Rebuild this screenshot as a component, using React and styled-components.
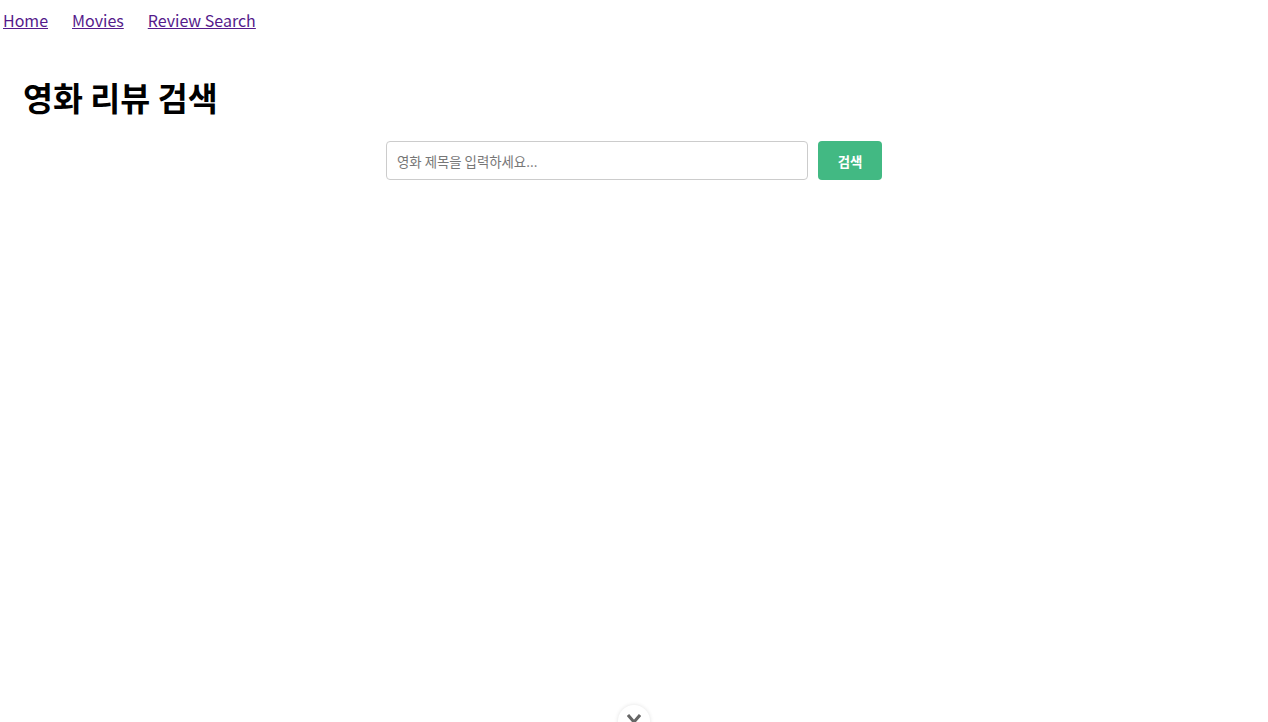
import React from "react";
import styled, { createGlobalStyle } from "styled-components";

const GlobalStyle = createGlobalStyle`
  html, body {
    margin: 0;
    padding: 0;
    background: #fff;
  }
  body {
    font-family: "Noto Sans CJK KR", sans-serif;
  }
`;

const Nav = styled.nav`
  display: flex;
  gap: 24px;
  padding: 8px 3px 0;
  height: 30px;
`;

const NavLink = styled.a`
  font-family: "Noto Sans CJK KR", sans-serif;
  font-size: 16px;
  line-height: 24px;
  color: #551a8b;
  text-decoration: underline;
`;

const Page = styled.div`
  padding: 37px 23px 0;
`;

const Title = styled.h1`
  margin: 0;
  font-family: "Noto Sans CJK KR", sans-serif;
  font-size: 32.6px;
  font-weight: 700;
  line-height: 44px;
  color: #000;
`;

const SearchRow = styled.form`
  display: flex;
  justify-content: center;
  gap: 10px;
  margin-top: 22px;
`;

const SearchInput = styled.input`
  width: 422px;
  height: 39px;
  box-sizing: border-box;
  padding: 0 10px;
  border: 1px solid #ccc;
  border-radius: 4px;
  font-family: "Noto Sans CJK KR", sans-serif;
  font-size: 13.4px;
  outline: none;
  &::placeholder {
    color: #777;
  }
`;

const SearchButton = styled.button`
  width: 64px;
  height: 39px;
  border: none;
  border-radius: 4px;
  background: #42b983;
  color: #fff;
  font-family: "Noto Sans CJK KR", sans-serif;
  font-size: 13.4px;
  font-weight: 700;
  cursor: pointer;
`;

const DevToggle = styled.div`
  position: fixed;
  left: 618px;
  top: 705px;
  width: 32px;
  height: 32px;
  border-radius: 50%;
  background: #fff;
  box-shadow: 0 0 4px rgba(0, 0, 0, 0.12);
  display: flex;
  justify-content: center;
  padding-top: 9px;
  box-sizing: border-box;
`;

export default function App() {
  return (
    <>
      <GlobalStyle />
      <Nav>
        <NavLink href="#">Home</NavLink>
        <NavLink href="#">Movies</NavLink>
        <NavLink href="#">Review Search</NavLink>
      </Nav>
      <Page>
        <Title>영화 리뷰 검색</Title>
        <SearchRow onSubmit={(e) => e.preventDefault()}>
          <SearchInput placeholder="영화 제목을 입력하세요..." />
          <SearchButton type="submit">검색</SearchButton>
        </SearchRow>
      </Page>
      <DevToggle>
        <svg width="14" height="10" viewBox="0 0 14 10">
          <path d="M1 1 L7 8 L13 1" fill="none" stroke="#666" strokeWidth="3" />
        </svg>
      </DevToggle>
    </>
  );
}
